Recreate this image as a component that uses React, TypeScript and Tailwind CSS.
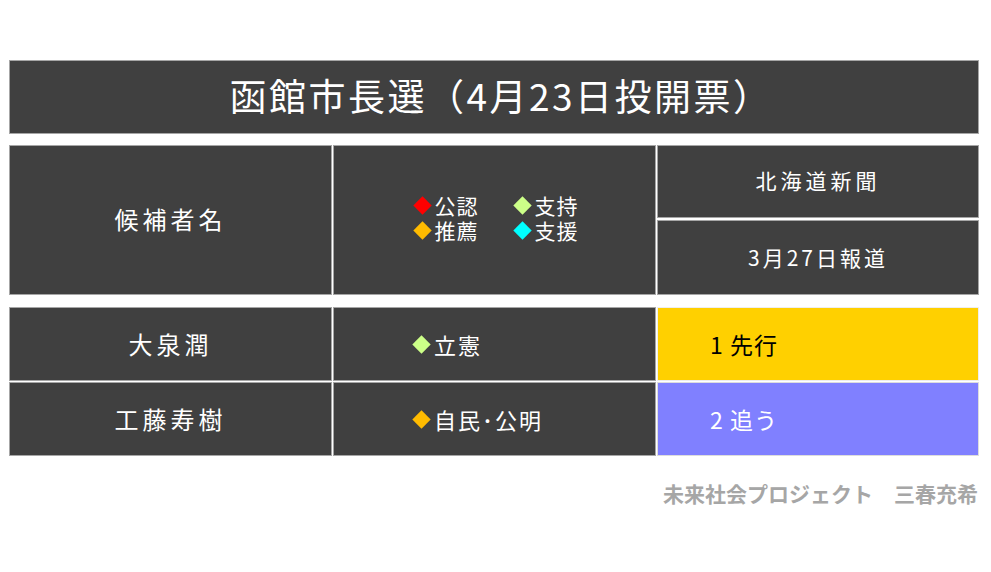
import React from 'react';

const jp = { fontFamily: '"Noto Sans CJK JP", "Noto Sans", sans-serif' };

const cell = 'bg-[#404040] border border-[#a6a6a6] text-white flex items-center';

const Diamond = ({ color }: { color: string }) => (
  <span className={`inline-block w-[13px] h-[13px] rotate-45 mr-[6px] ml-[3px] ${color}`} />
);

export default function App() {
  return (
    <div className="w-[991px] h-[572px] bg-white relative" style={jp}>
      <div className="pt-[60px] px-[9px] w-[988px]">
        {/* Title */}
        <div className={`${cell} justify-center h-[74px] text-[37px] tracking-[2.5px] pb-[2px] pl-[14px]`}>
          函館市長選（4月23日投開票）
        </div>

        {/* Header */}
        <div className="mt-[11px] grid grid-cols-[323px_323px_1fr] gap-[1px] h-[150px]">
          <div className={`${cell} justify-center text-[24px] tracking-[4px] pb-[2px]`}>候補者名</div>
          <div className={`${cell} justify-center text-[21px] tracking-[1px]`}>
            <div className="grid grid-cols-[100px_auto] leading-[25px] pl-[2px] pb-[5px]">
              <div className="flex items-center"><Diamond color="bg-[#ff0000]" />公認</div>
              <div className="flex items-center"><Diamond color="bg-[#ccff88]" />支持</div>
              <div className="flex items-center"><Diamond color="bg-[#ffbb00]" />推薦</div>
              <div className="flex items-center"><Diamond color="bg-[#00ffff]" />支援</div>
            </div>
          </div>
          <div className="grid grid-rows-[73px_1fr] gap-[2px]">
            <div className={`${cell} justify-center text-[21px] tracking-[4px] pb-[2px]`}>北海道新聞</div>
            <div className={`${cell} justify-center text-[21px] tracking-[3px]`}>3月27日報道</div>
          </div>
        </div>

        {/* Rows */}
        <div className="mt-[12px] grid grid-cols-[323px_323px_1fr] grid-rows-[74px_74px] gap-[1px]">
          <div className={`${cell} justify-center text-[24px] tracking-[4px]`}>大泉潤</div>
          <div className={`${cell} pl-[78px] text-[22px] tracking-[2px]`}><Diamond color="bg-[#ccff88]" />立憲</div>
          <div className="bg-[#ffd000] border border-[#eeeeee] flex items-center pl-[52px] text-[23px] tracking-[1px] text-black">1 先行</div>
          <div className={`${cell} justify-center text-[24px] tracking-[4px]`}>工藤寿樹</div>
          <div className={`${cell} pl-[78px] text-[22px] tracking-[2px]`}><Diamond color="bg-[#ffbb00]" />自民･公明</div>
          <div className="bg-[#8080ff] border border-[#dddddd] flex items-center pl-[52px] text-[23px] tracking-[1px] text-white">2 追う</div>
        </div>

        {/* Footer */}
        <div className="mt-[22px] flex justify-end pr-[1px] text-[21px] font-bold text-[#a6a6a6]">
          未来社会プロジェクト　三春充希
        </div>
      </div>
    </div>
  );
}
